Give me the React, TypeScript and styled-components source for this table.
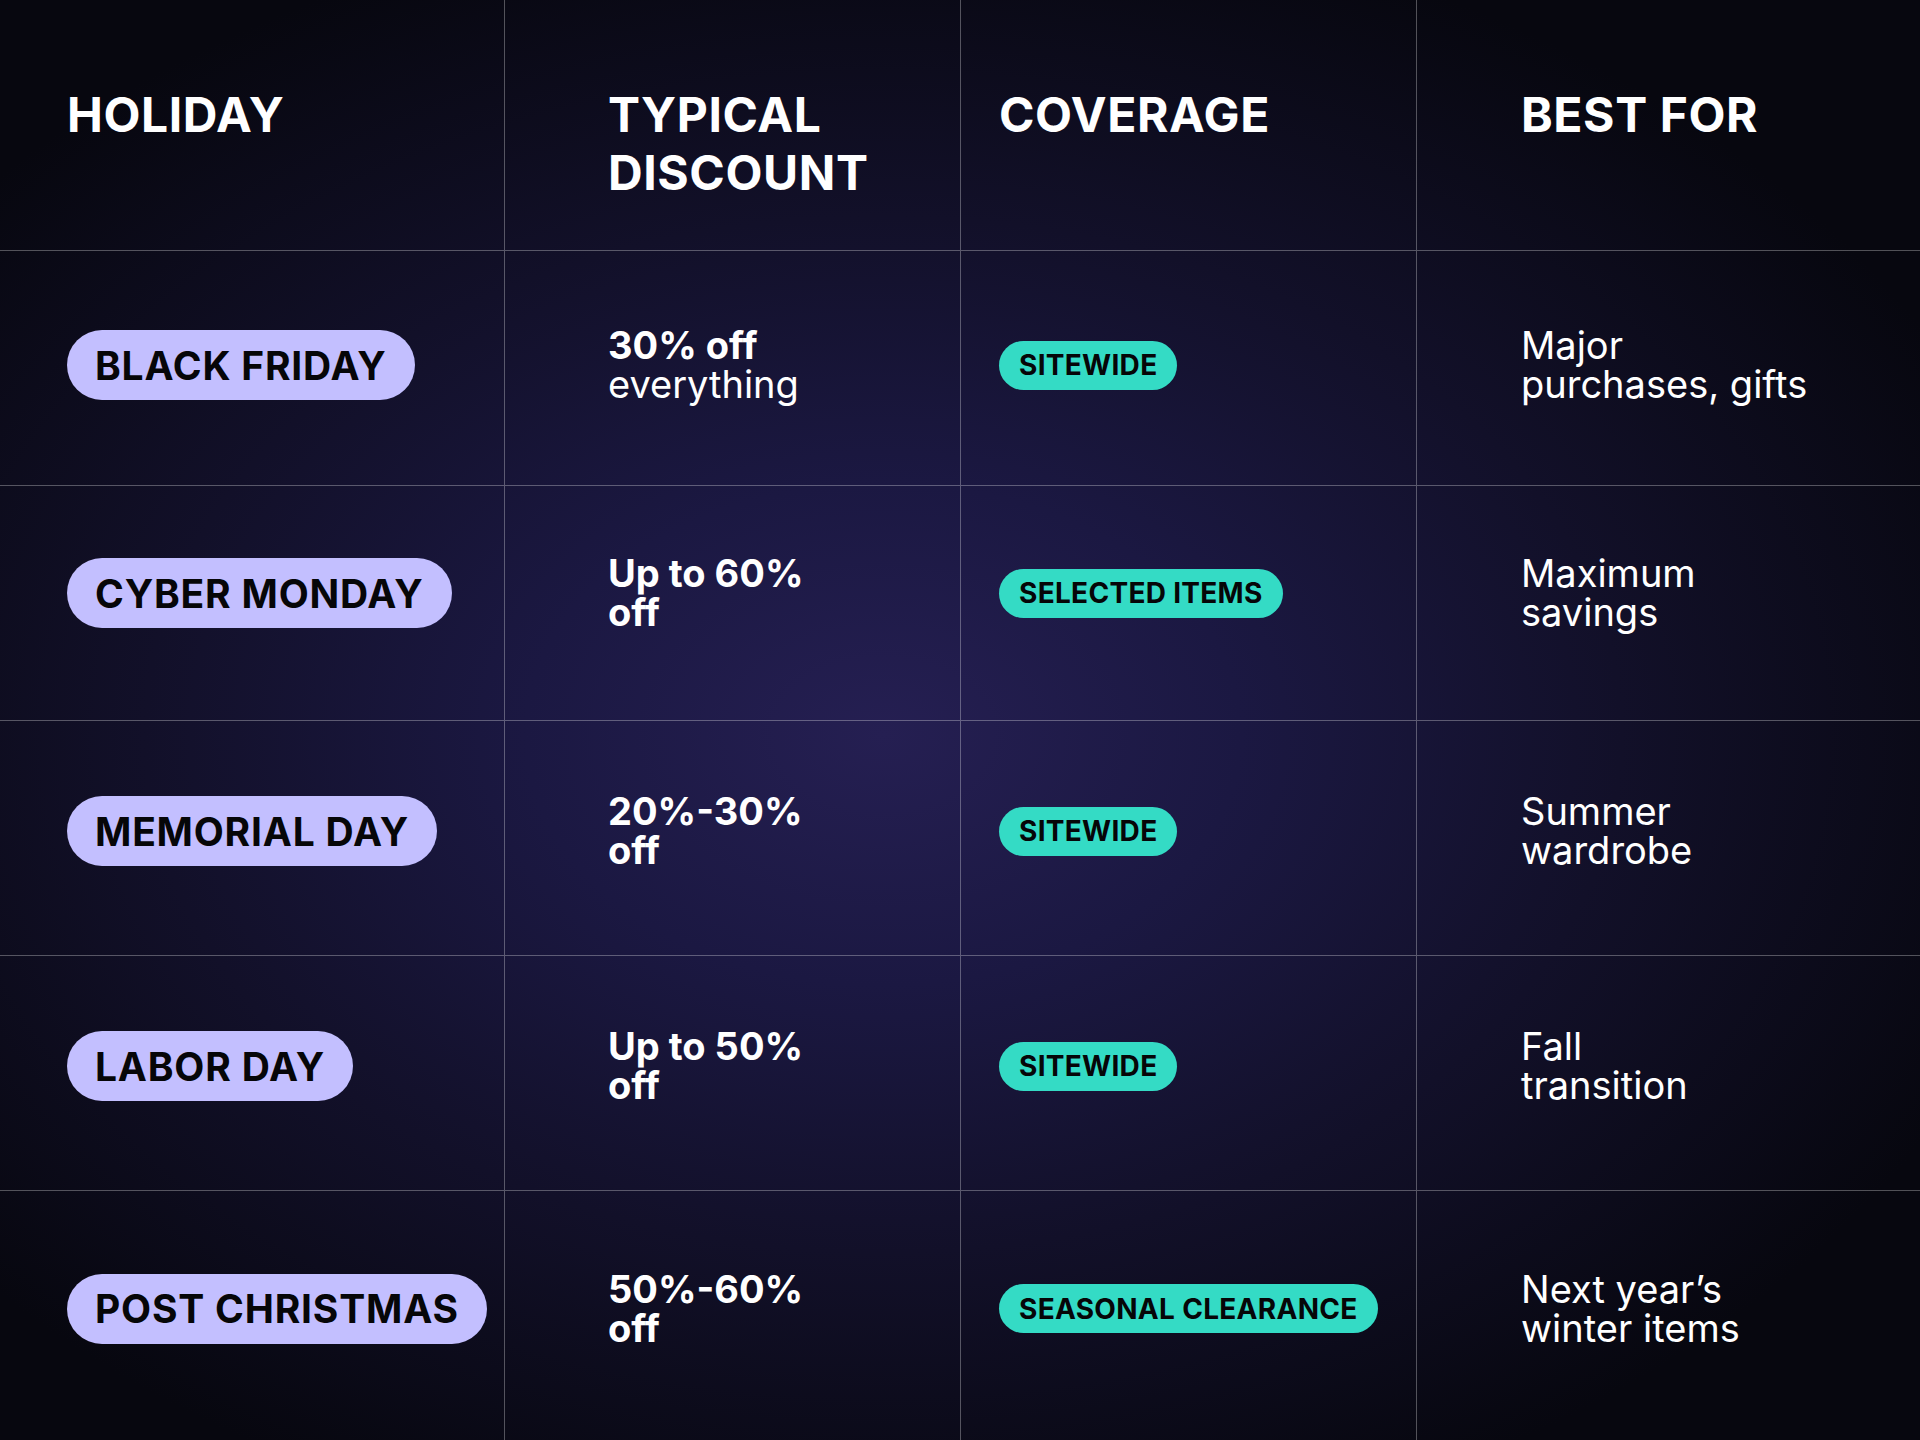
import React from 'react';
import styled, { createGlobalStyle } from 'styled-components';

const GlobalStyle = createGlobalStyle`
  html, body {
    margin: 0;
    padding: 0;
    background: #050509;
  }
  * {
    box-sizing: border-box;
  }
`;

const COLUMNS = '504px 456px 456px 504px';
const PAD = [67, 103, 38, 104];
const LINE = 'rgba(255, 255, 255, 0.3)';

const Board = styled.div`
  width: 1920px;
  height: 1440px;
  display: flex;
  flex-direction: column;
  overflow: hidden;
  font-family: Inter, "Liberation Sans", sans-serif;
  color: #ffffff;
  background:
    radial-gradient(ellipse 62% 58% at 46% 51%, #251f52 0%, #1b1842 30%, #121029 62%, #07070f 100%),
    #050509;
`;

const Row = styled.div<{ $height: number; $lift: number }>`
  display: grid;
  grid-template-columns: ${COLUMNS};
  height: ${({ $height }) => $height}px;
  flex: none;
  & + & {
    border-top: 1px solid ${LINE};
  }
  & > * {
    padding-bottom: ${({ $lift }) => $lift * 2}px;
  }
`;

const Cell = styled.div<{ $col: number }>`
  display: flex;
  flex-direction: column;
  justify-content: center;
  align-items: flex-start;
  padding-left: ${({ $col }) => PAD[$col]}px;
  border-left: ${({ $col }) => ($col === 0 ? 'none' : `1px solid ${LINE}`)};
`;

const HeadCell = styled(Cell)`
  justify-content: flex-start;
  padding-top: 86px;
`;

const HeadText = styled.div`
  font-size: 48px;
  line-height: 57.6px;
  font-weight: 700;
  text-transform: uppercase;
  letter-spacing: 0.6px;
`;

const Holiday = styled.span`
  display: inline-flex;
  align-items: center;
  height: 70px;
  padding: 0 28px;
  border-radius: 35px;
  background: #c3bfff;
  color: #060608;
  font-size: 39px;
  font-weight: 700;
  letter-spacing: 0.8px;
  white-space: nowrap;
`;

const Coverage = styled.span`
  display: inline-flex;
  align-items: center;
  height: 49px;
  padding: 0 20px;
  border-radius: 25px;
  background: #34dbc5;
  color: #060608;
  font-size: 28px;
  font-weight: 700;
  letter-spacing: 0.3px;
  white-space: nowrap;
`;

const Line = styled.span<{ $bold?: boolean }>`
  display: block;
  font-size: 38px;
  line-height: 39px;
  font-weight: ${({ $bold }) => ($bold ? 700 : 400)};
  white-space: nowrap;
`;

const headers = ['Holiday', 'Typical\nDiscount', 'Coverage', 'Best for'];

const rows = [
  {
    holiday: 'BLACK FRIDAY',
    discount: ['30% off', 'everything'],
    boldSecond: false,
    coverage: 'SITEWIDE',
    best: ['Major', 'purchases, gifts'],
    lift: 3,
  },
  {
    holiday: 'CYBER MONDAY',
    discount: ['Up to 60%', 'off'],
    boldSecond: true,
    coverage: 'SELECTED ITEMS',
    best: ['Maximum', 'savings'],
    lift: 10,
  },
  {
    holiday: 'MEMORIAL DAY',
    discount: ['20%-30%', 'off'],
    boldSecond: true,
    coverage: 'SITEWIDE',
    best: ['Summer', 'wardrobe'],
    lift: 7,
  },
  {
    holiday: 'LABOR DAY',
    discount: ['Up to 50%', 'off'],
    boldSecond: true,
    coverage: 'SITEWIDE',
    best: ['Fall', 'transition'],
    lift: 7,
  },
  {
    holiday: 'POST CHRISTMAS',
    discount: ['50%-60%', 'off'],
    boldSecond: true,
    coverage: 'SEASONAL CLEARANCE',
    best: ['Next year’s', 'winter items'],
    lift: 7,
  },
];

export default function App() {
  return (
    <>
      <GlobalStyle />
      <Board>
        <Row $height={250} $lift={0}>
          {headers.map((h, i) => (
            <HeadCell key={h} $col={i}>
              {h.split('\n').map((part) => (
                <HeadText key={part}>{part}</HeadText>
              ))}
            </HeadCell>
          ))}
        </Row>
        {rows.map((r, i) => (
          <Row key={r.holiday} $height={i === rows.length - 1 ? 250 : 235} $lift={r.lift}>
            <Cell $col={0}>
              <Holiday>{r.holiday}</Holiday>
            </Cell>
            <Cell $col={1}>
              <Line $bold>{r.discount[0]}</Line>
              <Line $bold={r.boldSecond}>{r.discount[1]}</Line>
            </Cell>
            <Cell $col={2}>
              <Coverage>{r.coverage}</Coverage>
            </Cell>
            <Cell $col={3}>
              <Line>{r.best[0]}</Line>
              <Line>{r.best[1]}</Line>
            </Cell>
          </Row>
        ))}
      </Board>
    </>
  );
}
